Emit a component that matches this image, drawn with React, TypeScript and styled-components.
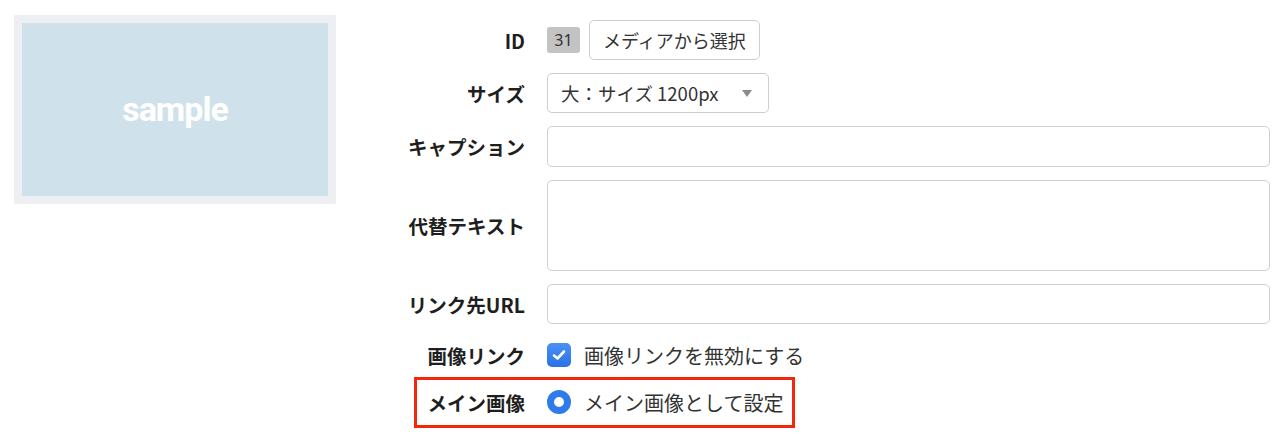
import React from "react"
import styled, { createGlobalStyle } from "styled-components"

const GlobalStyle = createGlobalStyle`
    html, body {
        margin: 0;
        padding: 0;
        background: #fff;
    }
    body {
        font-family: "Noto Sans CJK JP", "Noto Sans", sans-serif;
        color: #222;
    }
`

const Page = styled.div`
    display: flex;
    align-items: flex-start;
    min-height: 441px;
    box-sizing: border-box;
    padding: 15px 10px 0 14px;
    gap: 54px;
`

const Thumb = styled.div`
    flex: none;
    width: 322px;
    height: 189px;
    box-sizing: border-box;
    padding: 8px;
    background: #eeeff2;
`

const ThumbImage = styled.div`
    height: 100%;
    background: #cfe2eb;
    display: flex;
    align-items: center;
    justify-content: center;
    color: #fff;
    font-family: Roboto, "Liberation Sans", sans-serif;
    font-weight: 700;
    font-size: 34px;
    letter-spacing: -1px;
    padding-bottom: 2px;
    box-sizing: border-box;
`

const Form = styled.div`
    flex: 1;
    display: flex;
    flex-direction: column;
    gap: 13px;
    padding-top: 5px;
`

const Row = styled.div<{ $minHeight?: number }>`
    position: relative;
    display: grid;
    grid-template-columns: 135px 1fr;
    column-gap: 22px;
    align-items: center;
    min-height: ${(p) => p.$minHeight ?? 0}px;
`

const Label = styled.div`
    text-align: right;
    white-space: nowrap;
    font-weight: 700;
    font-size: 19.5px;
    color: #1e1e1e;
`

const Inline = styled.div`
    display: flex;
    align-items: center;
    gap: 9px;
`

const Badge = styled.span`
    width: 33px;
    height: 26px;
    border-radius: 3px;
    background: #c3c3c3;
    color: #333;
    font-family: "Noto Sans", sans-serif;
    font-size: 16px;
    display: flex;
    align-items: center;
    justify-content: center;
`

const Button = styled.button`
    height: 40px;
    padding: 0 13px;
    border: 1.5px solid #cdcdcd;
    border-radius: 5px;
    background: #fff;
    color: #333;
    font-family: inherit;
    font-size: 18px;
`

const Select = styled.div`
    width: 222px;
    height: 40px;
    box-sizing: border-box;
    padding: 0 16px 0 13px;
    border: 1.5px solid #cdcdcd;
    border-radius: 5px;
    display: flex;
    align-items: center;
    justify-content: space-between;
    color: #333;
    font-size: 18.5px;
`

const Caret = styled.span`
    width: 0;
    height: 0;
    border-left: 5.5px solid transparent;
    border-right: 5.5px solid transparent;
    border-top: 7px solid #8c8c8c;
`

const Input = styled.input<{ $height?: number }>`
    height: ${(p) => p.$height ?? 40}px;
    box-sizing: border-box;
    width: 100%;
    border: 1.5px solid #d0d0d0;
    border-radius: 5px;
    background: #fff;
`

const TextArea = styled.textarea`
    height: 91px;
    box-sizing: border-box;
    width: 100%;
    border: 1.5px solid #d0d0d0;
    border-radius: 5px;
    resize: none;
    display: block;
`

const Choice = styled.label`
    display: flex;
    align-items: center;
    gap: 13px;
    font-size: 20px;
    color: #333;
`

const CheckBox = styled.span`
    width: 24px;
    height: 24px;
    border-radius: 5px;
    background: linear-gradient(#4b90f5, #2a72e6);
    display: flex;
    align-items: center;
    justify-content: center;
`

const Radio = styled.span`
    width: 24px;
    height: 24px;
    box-sizing: border-box;
    border-radius: 50%;
    border: 7px solid #2f7bec;
    background: #fff;
`

const Highlight = styled.span`
    position: absolute;
    left: 24px;
    top: -9px;
    width: 381px;
    height: 51px;
    box-sizing: border-box;
    border: 3px solid #f4260c;
    pointer-events: none;
`

const App = () => {
    return (
        <>
            <GlobalStyle />
            <Page>
                <Thumb>
                    <ThumbImage>sample</ThumbImage>
                </Thumb>
                <Form>
                    <Row>
                        <Label>ID</Label>
                        <Inline>
                            <Badge>31</Badge>
                            <Button>メディアから選択</Button>
                        </Inline>
                    </Row>
                    <Row>
                        <Label>サイズ</Label>
                        <Select>
                            <span>大：サイズ 1200px</span>
                            <Caret />
                        </Select>
                    </Row>
                    <Row>
                        <Label>キャプション</Label>
                        <Input $height={41} />
                    </Row>
                    <Row>
                        <Label>代替テキスト</Label>
                        <TextArea />
                    </Row>
                    <Row>
                        <Label>リンク先URL</Label>
                        <Input />
                    </Row>
                    <Row $minHeight={36}>
                        <Label>画像リンク</Label>
                        <Choice>
                            <CheckBox>
                                <svg width="14" height="12" viewBox="0 0 14 12">
                                    <path
                                        d="M2 6.5 L5.5 9.5 L12 2.5"
                                        fill="none"
                                        stroke="#fff"
                                        strokeWidth="2.6"
                                        strokeLinecap="round"
                                        strokeLinejoin="round"
                                    />
                                </svg>
                            </CheckBox>
                            画像リンクを無効にする
                        </Choice>
                    </Row>
                    <Row $minHeight={32}>
                        <Highlight />
                        <Label>メイン画像</Label>
                        <Choice>
                            <Radio />
                            メイン画像として設定
                        </Choice>
                    </Row>
                </Form>
            </Page>
        </>
    )
}

export default App
